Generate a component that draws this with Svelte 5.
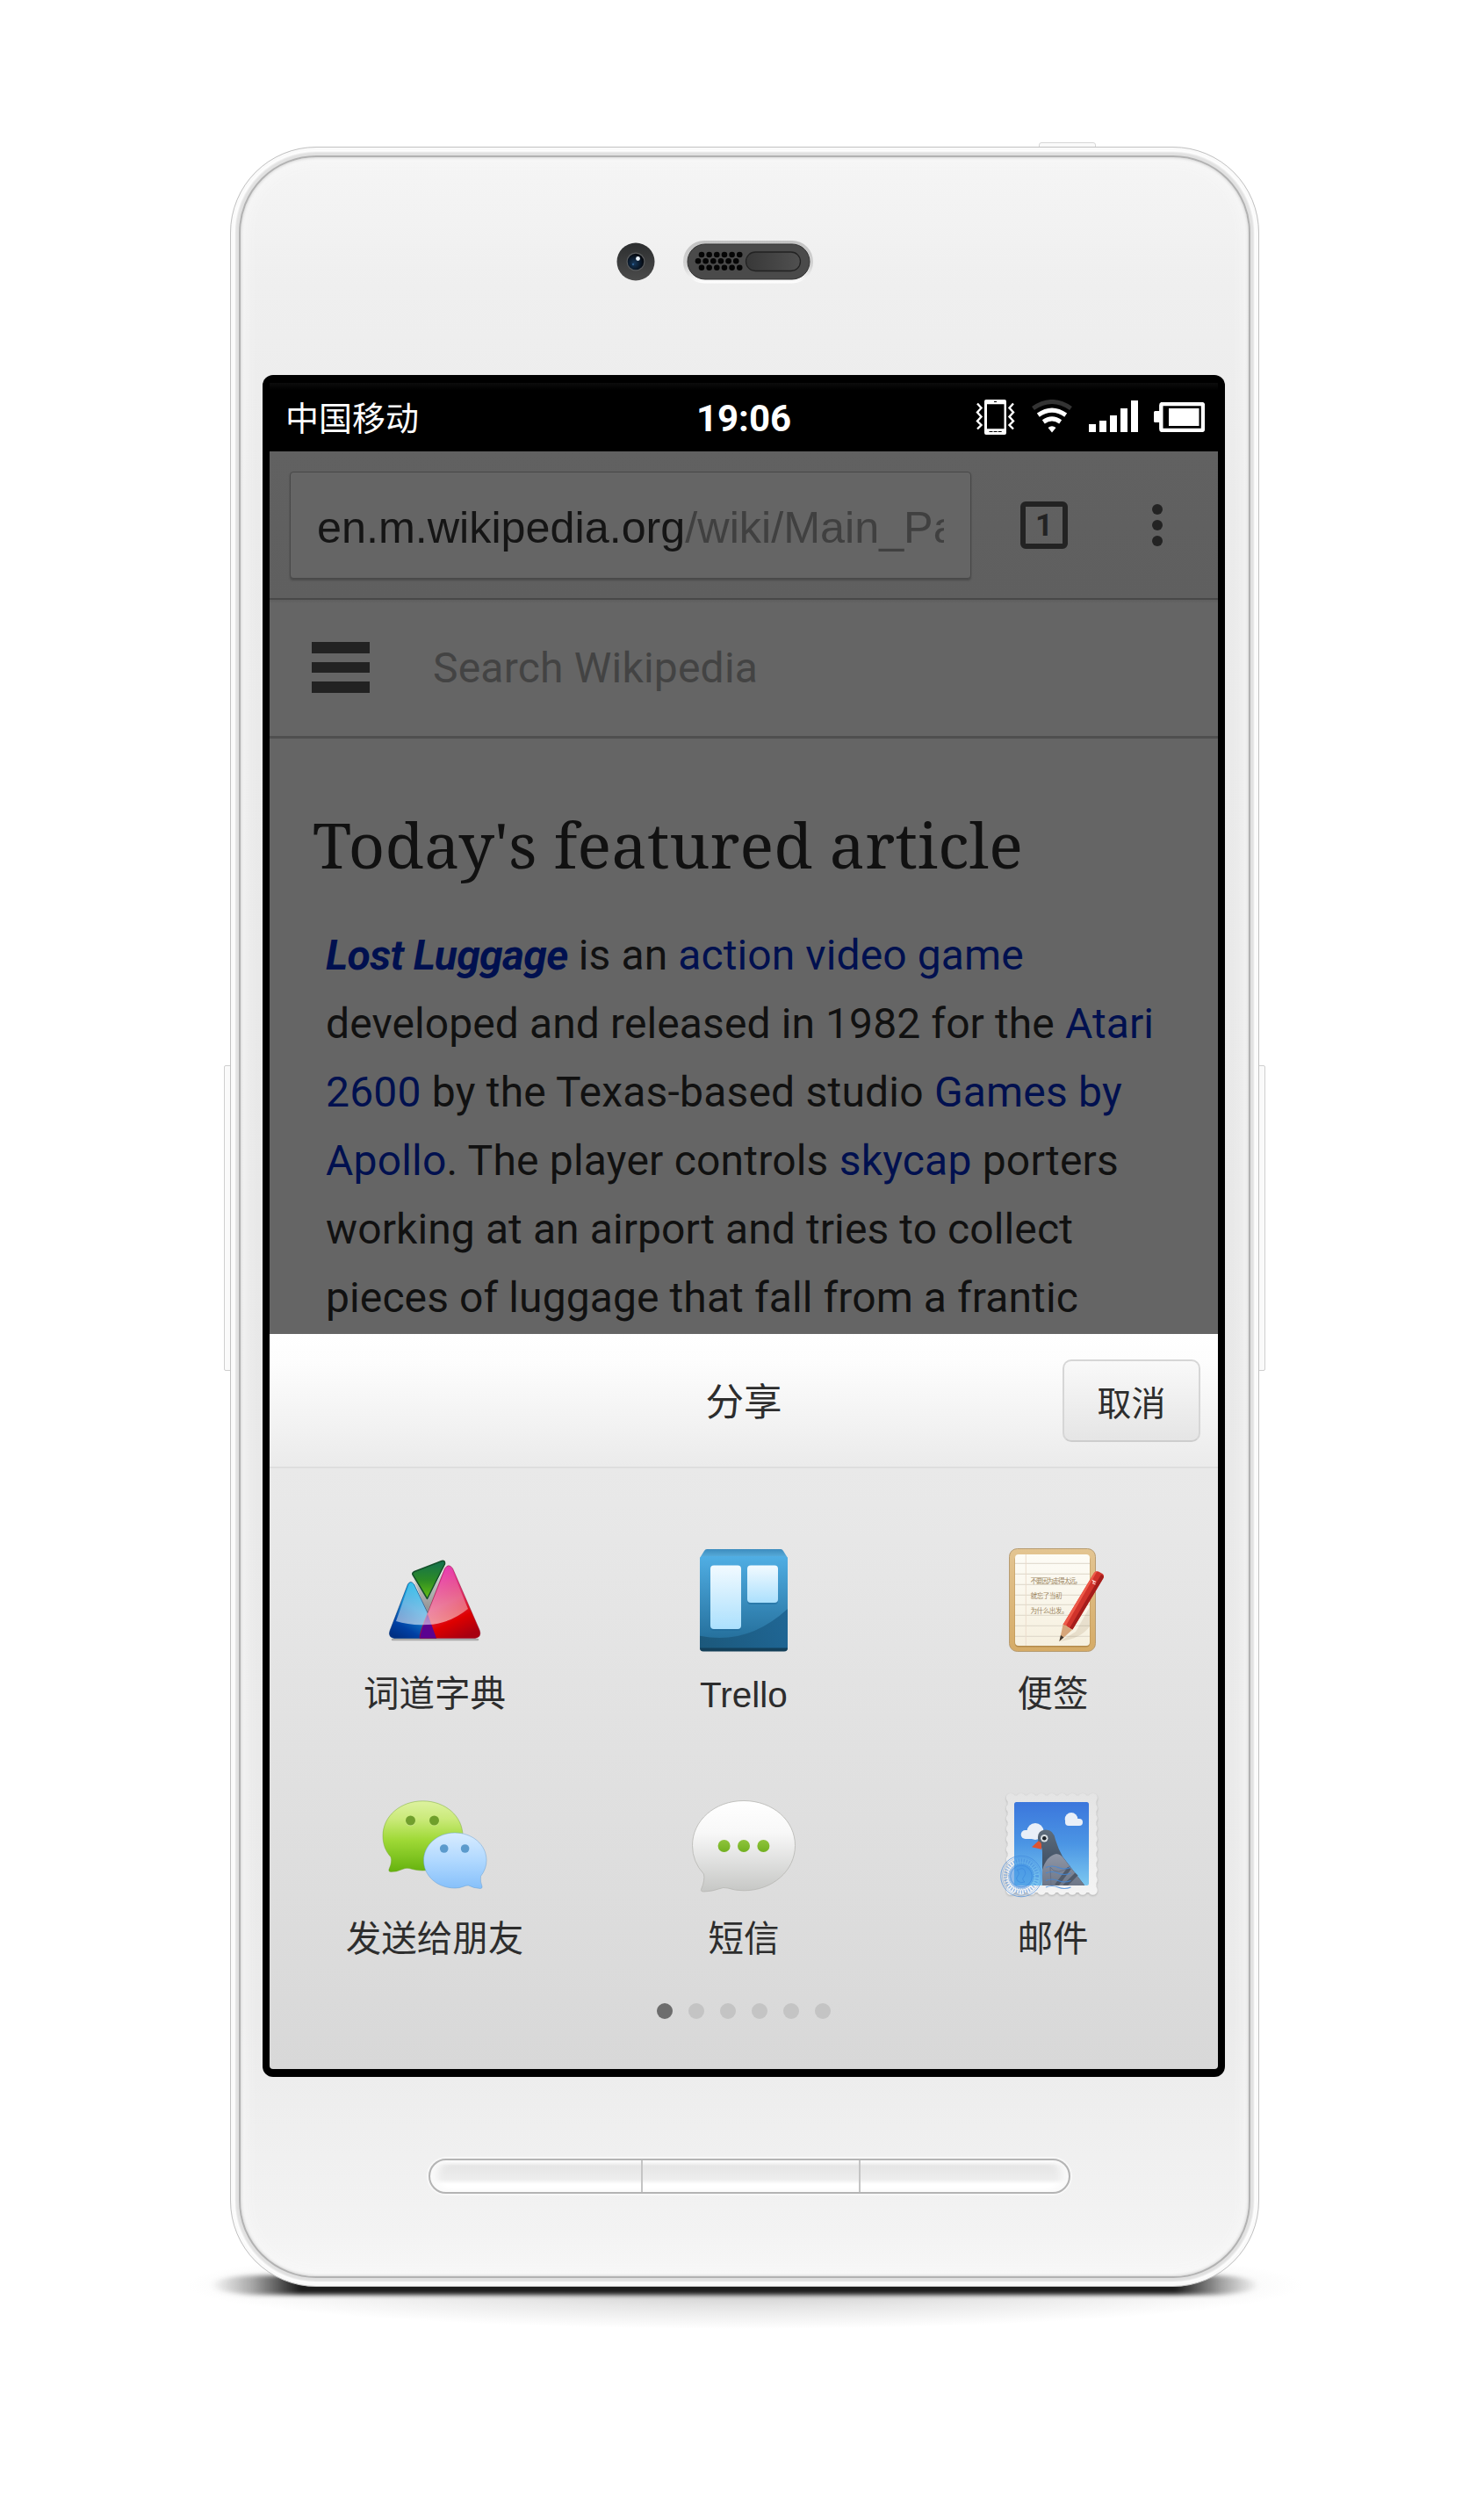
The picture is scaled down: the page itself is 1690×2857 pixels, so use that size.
<script>
  const signal = [9, 13, 19, 27, 36];
  const holes = [
    { y: 290, x0: 798 },
    { y: 297.3, x0: 794 },
    { y: 304.7, x0: 798 }
  ];
  const apps = [
    { id: 'dict', label: '词道字典' },
    { id: 'trello', label: 'Trello' },
    { id: 'notes', label: '便签' },
    { id: 'wechat', label: '发送给朋友' },
    { id: 'sms', label: '短信' },
    { id: 'mail', label: '邮件' }
  ];
  const ruled = [18.3, 30.3, 42.3, 54.3, 65.3, 77.3, 89.3, 101.3];
  const waves = [85.5, 92, 100.5, 108];
</script>

<div class="page">
  <div class="phone">
    <i class="ground haze"></i>
    <i class="ground core"></i>
    <i class="key power"></i>
    <i class="key left"></i>
    <i class="key right"></i>
    <div class="shell">
      <div class="face">
        <div class="sensors">
          <svg class="camera" width="44" height="44" viewBox="0 0 44 44">
            <defs>
              <linearGradient id="camRing" x1="0" y1="0" x2="0" y2="1">
                <stop offset="0" stop-color="#2c2e2f" /><stop offset="1" stop-color="#4b4b4b" />
              </linearGradient>
              <radialGradient id="lens" cx=".4" cy=".6" r=".6">
                <stop offset="0" stop-color="#17395c" /><stop offset=".6" stop-color="#0b1a2c" /><stop offset="1" stop-color="#05080d" />
              </radialGradient>
            </defs>
            <circle cx="22" cy="22" r="21.5" fill="url(#camRing)" />
            <circle cx="22" cy="22" r="10.5" fill="#5a5c5e" />
            <circle cx="22" cy="22" r="9.3" fill="url(#lens)" />
            <circle cx="24.5" cy="18.5" r="2.4" fill="#e9f2fa" />
            <circle cx="19" cy="25" r="1.2" fill="#2f5f8d" />
          </svg>
          <svg class="speaker" width="148" height="49" viewBox="777 274 148 49">
            <defs>
              <linearGradient id="rim" x1="0" y1="0" x2="0" y2="1">
                <stop offset="0" stop-color="#c2c2c2" /><stop offset=".6" stop-color="#d4d4d4" /><stop offset="1" stop-color="#fff" />
              </linearGradient>
              <linearGradient id="pill" x1="0" y1="0" x2="1" y2="0">
                <stop offset="0" stop-color="#383838" /><stop offset="1" stop-color="#505050" />
              </linearGradient>
            </defs>
            <rect x="777" y="274" width="148" height="48.5" rx="24" fill="url(#rim)" />
            <rect x="782" y="278" width="139" height="40" rx="20" fill="#4a4a4a" stroke="#333" />
            {#each holes as row}
              {#each [0, 1, 2, 3, 4, 5] as i}
                <circle cx={row.x0 + i * 8.65} cy={row.y} r="3.3" fill="#050505" />
              {/each}
            {/each}
            <rect x="848.5" y="287" width="62" height="21.5" rx="10.7" fill="url(#pill)" stroke="#222" stroke-width="1.3" />
          </svg>
        </div>

        <div class="screen">
          <div class="status">
            <span class="carrier">中国移动</span>
            <span class="clock">19:06</span>
            <div class="indicators">
              <svg width="46" height="40" viewBox="0 0 46 40">
                <path fill="#fff" fill-rule="evenodd" d="M12 0h21a2 2 0 0 1 2 2v36a2 2 0 0 1-2 2H12a2 2 0 0 1-2-2V2a2 2 0 0 1 2-2zM13 5.200v28h19.500v-28z" />
                <path d="M21 2.500h3M15.500 36.500h4M20.600 36.500h4M25.700 36.500h4" stroke="#000" />
                <path d="M2 4.500l4.500 5-4.500 5 4.500 5-4.500 5 4.500 4.500-4.500 4.500M43 4.500l-4.500 5 4.500 5-4.500 5 4.500 5-4.500 4.500 4.500 4.500" fill="none" stroke="#fff" stroke-width="2.400" />
              </svg>
              <svg class="wifi" width="48" height="38" viewBox="0 0 48 38">
                <g fill="none" stroke-width="5">
                  <path d="M2.500 10Q24-5 45.500 10" stroke="#333" />
                  <path d="M8.300 17.600Q24 6.600 39.700 17.600" stroke="#fff" />
                  <path d="M14.300 25.400Q24 18.400 33.700 25.400" stroke="#fff" />
                </g>
                <path d="M19.500 32Q24 28.500 28.500 32L24 37.500z" fill="#fff" />
              </svg>
              <div class="signal">
                {#each signal as h}<i style="height:{h}px"></i>{/each}
              </div>
              <svg class="battery" width="58" height="34" viewBox="0 0 58 34">
                <rect x="0" y="10" width="8" height="13" rx="1.500" fill="#fff" />
                <rect x="8.300" y="2" width="47.700" height="30" rx="1.500" fill="none" stroke="#fff" stroke-width="4.400" />
                <rect x="17" y="7" width="34.500" height="20" fill="#fff" />
              </svg>
            </div>
          </div>

          <div class="toolbar">
            <div class="url"><span>en.m.wikipedia.org<em>/wiki/Main_Page</em></span></div>
            <div class="tabs">1</div>
            <div class="more"><i></i><i></i><i></i></div>
          </div>

          <div class="search">
            <div class="burger"><i></i><i></i><i></i></div>
            <span>Search Wikipedia</span>
          </div>

          <div class="article">
            <h1>Today's featured article</h1>
            <div class="copy">
              <p><b>Lost Luggage</b> is an <a>action video game</a></p>
              <p>developed and released in 1982 for the <a>Atari</a></p>
              <p class="wide"><a>2600</a> by the Texas-based studio <a>Games by</a></p>
              <p class="wide"><a>Apollo</a>. The player controls <a>skycap</a> porters</p>
              <p>working at an airport and tries to collect</p>
              <p>pieces of luggage that fall from a frantic</p>
            </div>
          </div>

          <div class="sheet">
            <div class="sheet-head">
              <span></span>
              <h2>分享</h2>
              <button>取消</button>
            </div>
            <div class="apps">
              {#each apps as app}
                <div class="app">
                  <svg width="120" height="120" viewBox="0 0 120 120">
                    {#if app.id === 'dict'}
                      <defs>
                        <linearGradient id="dBlue" x1=".7" y1="0" x2=".2" y2="1">
                          <stop offset="0" stop-color="#14c3ee" /><stop offset=".45" stop-color="#1a8fd4" /><stop offset=".8" stop-color="#0040a4" /><stop offset="1" stop-color="#003084" />
                        </linearGradient>
                        <linearGradient id="dRed" x1=".3" y1="0" x2=".7" y2="1">
                          <stop offset="0" stop-color="#ea3fc0" /><stop offset=".5" stop-color="#e02c60" /><stop offset=".75" stop-color="#de0000" /><stop offset="1" stop-color="#a80010" />
                        </linearGradient>
                        <linearGradient id="dGreen" x1="0" y1="0" x2="0" y2="1">
                          <stop offset="0" stop-color="#14704f" /><stop offset=".5" stop-color="#2b8a26" /><stop offset="1" stop-color="#66c010" />
                        </linearGradient>
                        <linearGradient id="dGray" x1="0" y1="0" x2="0" y2="1">
                          <stop offset="0" stop-color="#ddd" /><stop offset="1" stop-color="#888" />
                        </linearGradient>
                        <linearGradient id="dGloss" x1="0" y1="0" x2="0" y2="1">
                          <stop offset="0" stop-color="#fff" stop-opacity="0" /><stop offset="1" stop-color="#fff" stop-opacity=".55" />
                        </linearGradient>
                      </defs>
                      <path d="M12 105H109" stroke="#000" stroke-opacity=".25" stroke-width="2.500" stroke-linecap="round" />
                      <path d="M36 36L52 78L73 22L51 58z" fill="url(#dGray)" />
                      <path d="M29.500 42Q32.500 37 36.500 42L52 75L62 103.500H14Q6.500 102 9 95z" fill="url(#dBlue)" stroke="#00327a" stroke-opacity=".6" stroke-width="1" />
                      <path d="M71.500 24Q76 17.500 80.500 24L111 94Q114 102 106 103.500H43Q42 99 52 75z" fill="url(#dRed)" stroke="#900c30" stroke-opacity=".5" stroke-width="1" />
                      <path d="M52 76L62 103.500H43Q44 95 52 76z" fill="#5a0390" />
                      <path d="M16 84L31 42Q33 38 36 42L52 75L73 24Q76 20 79 24L98 70Q77 87 52 88Q31 89 16 84z" fill="url(#dGloss)" />
                      <path d="M35 31Q34 29 37 27.500L68 15.500Q72 14.500 71.500 19L51.500 58.500z" fill="url(#dGreen)" stroke="#14502a" stroke-width="1.500" stroke-linejoin="round" />
                    {:else if app.id === 'trello'}
                      <defs>
                        <linearGradient id="tBody" x1="0" y1="0" x2="0" y2="1">
                          <stop offset="0" stop-color="#50aee4" /><stop offset="1" stop-color="#1f6792" />
                        </linearGradient>
                        <linearGradient id="tLid" x1="0" y1="0" x2="0" y2="1">
                          <stop offset="0" stop-color="#3c8cbe" /><stop offset="1" stop-color="#5cb0de" />
                        </linearGradient>
                        <linearGradient id="tCard" x1="0" y1="0" x2="0" y2="1">
                          <stop offset="0" stop-color="#f2faff" /><stop offset="1" stop-color="#abe0fd" />
                        </linearGradient>
                        <linearGradient id="tDark" x1="0" y1="0" x2="1" y2="0">
                          <stop offset="0" stop-color="#1b5678" /><stop offset="1" stop-color="#1e6492" />
                        </linearGradient>
                      </defs>
                      <path d="M18 2H102Q104 2 105 4L110 12H10L15 4Q16 2 18 2z" fill="url(#tLid)" />
                      <path d="M10 12Q11 10 14 10H106Q109 10 110 12V114Q110 118 106 118H14Q10 118 10 114z" fill="url(#tBody)" />
                      <path d="M10 100.700Q64 112 110 70V115H10z" fill="url(#tDark)" opacity=".9" />
                      <path d="M10 114.500H110Q110 118.500 106 118.500H14Q10 118.500 10 114.500z" fill="#133f59" />
                      <rect x="22" y="22" width="35" height="73" rx="4" fill="#1c6796" opacity=".45" />
                      <rect x="64" y="22" width="35" height="43" rx="4" fill="#1c6796" opacity=".45" />
                      <rect x="22" y="20.500" width="35" height="72.500" rx="4" fill="url(#tCard)" />
                      <rect x="64" y="20.500" width="35" height="42.500" rx="4" fill="url(#tCard)" />
                    {:else if app.id === 'notes'}
                      <defs>
                        <linearGradient id="nBoard" x1="0" y1="0" x2="0" y2="1">
                          <stop offset="0" stop-color="#e3c592" /><stop offset="1" stop-color="#d5ab66" />
                        </linearGradient>
                        <linearGradient id="nPaper" x1="0" y1="0" x2="0" y2="1">
                          <stop offset="0" stop-color="#fdfcf6" /><stop offset="1" stop-color="#f6f0df" />
                        </linearGradient>
                      </defs>
                      <rect x="10.500" y="1.500" width="98" height="117" rx="9" fill="url(#nBoard)" stroke="#b79c72" />
                      <rect x="16.500" y="9.500" width="86" height="104" rx="4.500" fill="#8a6227" opacity=".45" />
                      <rect x="17" y="8" width="85" height="104" rx="4" fill="url(#nPaper)" />
                      {#each ruled as y}<path d="M17 {y}H102" stroke="#dcd6c8" />{/each}
                      <path d="M29.300 8V112" stroke="#ecdccb" />
                      <g class="hand">
                        <text x="34.500" y="40.500" textLength="58">不要因为走得太远，</text>
                        <text x="34.500" y="57.500" textLength="36">就忘了当初</text>
                        <text x="34.500" y="75" textLength="43">为什么出发。</text>
                      </g>
                      <path d="M68 107L86 96L102 68V90Q92 104 68 107z" fill="#7a5a30" opacity=".13" />
                      <path d="M71.500 88L107 29Q109 26.500 112 27.500L116.500 30Q119 32 117.500 35L82.500 93.500z" fill="#d0332b" />
                      <path d="M71.500 88L107 29Q108.500 27 110.500 27L75 89z" fill="#ef5a49" />
                      <path d="M79 92L115 31Q119 32 117.500 35L82.500 93.500z" fill="#a51d1b" />
                      <path d="M71.500 88L75.500 89L78.500 92L82.500 93.500L67.500 107z" fill="#d7a67a" />
                      <path d="M69 100L72.500 102.500L67.300 107z" fill="#42372f" />
                      <path d="M106 38l3 1.500m-4 1l3.500 1.500m-3.500-5l2 3" stroke="#fbd9d3" stroke-width="1.300" />
                    {:else if app.id === 'wechat'}
                      <defs>
                        <linearGradient id="wGreen" x1="0" y1="0" x2="0" y2="1">
                          <stop offset="0" stop-color="#ddf29f" /><stop offset=".25" stop-color="#cbea7b" /><stop offset=".55" stop-color="#9fd936" /><stop offset="1" stop-color="#65b20e" />
                        </linearGradient>
                        <linearGradient id="wBlue" x1="0" y1="0" x2="0" y2="1">
                          <stop offset="0" stop-color="#d8ecff" /><stop offset=".5" stop-color="#b0d8ff" /><stop offset="1" stop-color="#86c0fa" />
                        </linearGradient>
                      </defs>
                      <path d="M46.500 9.800C72 9.800 92 27 92 49.500S72 89 46.500 89C41 89 36 88 31 86.500Q27 85.500 22 88T10 90.500Q7 90.500 8 87.500Q12 79 10 73.500C4 67 1 59 1 49.500C1 27 21 9.800 46.500 9.800z" fill="url(#wGreen)" stroke="#6fa52a" stroke-opacity=".45" />
                      <circle cx="32.500" cy="32.800" r="5.500" fill="#d8f09a" />
                      <circle cx="59.500" cy="32.800" r="5.500" fill="#d0ec88" />
                      <circle cx="32.500" cy="32" r="5.500" fill="#719f2d" />
                      <circle cx="59.500" cy="32" r="5.500" fill="#6f9f2a" />
                      <path d="M83 46C103 46 119 59.500 119 77.500Q119 87 112.500 95.500Q111.500 101 114 107Q114.500 109.500 112 109.500Q104 109 98.500 106Q96 105.500 92 107.500Q88 109 83 109C63 109 47.500 95 47.500 77.500S63 46 83 46z" fill="url(#wBlue)" stroke="#5f9bd0" stroke-opacity=".45" />
                      <circle cx="70.700" cy="64" r="4.800" fill="#5b9acc" />
                      <circle cx="94.600" cy="64" r="4.800" fill="#5b9acc" />
                    {:else if app.id === 'sms'}
                      <defs>
                        <linearGradient id="sBody" x1="0" y1="0" x2="0" y2="1">
                          <stop offset="0" stop-color="#fff" /><stop offset=".35" stop-color="#f8f8f8" /><stop offset="1" stop-color="#c6c7c5" />
                        </linearGradient>
                        <linearGradient id="sDot" x1="0" y1="0" x2="0" y2="1">
                          <stop offset="0" stop-color="#8fc43c" /><stop offset="1" stop-color="#72b020" />
                        </linearGradient>
                      </defs>
                      <path d="M60 9.500C93 9.500 118.500 32 118.500 60.500S93 111.800 60 111.800Q50 111.800 42 109Q37 107.500 31 110T15 113Q10.500 113 11.500 110.500Q16 100 14.500 93Q1.500 79 1.500 60.500C1.500 32 27 9.500 60 9.500z" fill="url(#sBody)" stroke="#b6b7b3" stroke-opacity=".8" />
                      <circle cx="37.600" cy="61" r="7" fill="url(#sDot)" />
                      <circle cx="60" cy="61" r="7" fill="url(#sDot)" />
                      <circle cx="82.400" cy="61" r="7" fill="url(#sDot)" />
                    {:else}
                      <defs>
                        <linearGradient id="mSky" x1="0" y1="0" x2="0" y2="1">
                          <stop offset="0" stop-color="#3b76dc" /><stop offset=".5" stop-color="#4b95e4" /><stop offset="1" stop-color="#7cc8f0" />
                        </linearGradient>
                        <linearGradient id="mPaper" gradientUnits="userSpaceOnUse" x1="0" y1="0" x2="0" y2="118">
                          <stop offset="0" stop-color="#e4e4e4" /><stop offset="1" stop-color="#f4f4f4" />
                        </linearGradient>
                        <linearGradient id="mBird" x1="0" y1="0" x2="0" y2="1">
                          <stop offset="0" stop-color="#5e6c7b" /><stop offset=".5" stop-color="#46566a" /><stop offset="1" stop-color="#3c4a5c" />
                        </linearGradient>
                        <linearGradient id="mWing" x1="0" y1="0" x2="0" y2="1">
                          <stop offset="0" stop-color="#8f96a6" /><stop offset="1" stop-color="#6d7687" />
                        </linearGradient>
                        <clipPath id="mClip"><rect x="16" y="11" width="85" height="95" rx="2" /></clipPath>
                      </defs>
                      <g class="stamp">
                        <rect x="8.500" y="3.500" width="101" height="110.500" rx="3" fill="url(#mPaper)" />
                        <rect x="12" y="6.200" width="93.600" height="105.300" fill="none" stroke="url(#mPaper)" stroke-width="10.400" stroke-linecap="round" stroke-dasharray="0 11.700" />
                      </g>
                      <rect x="16" y="11" width="85" height="95" rx="2.500" fill="url(#mSky)" />
                      <g fill="#e9eff8">
                        <circle cx="40" cy="44.500" r="9.500" /><rect x="23.700" y="43" width="28" height="10" rx="5" />
                        <circle cx="81" cy="30.300" r="7.300" /><rect x="74" y="30" width="20" height="8" rx="4" />
                      </g>
                      <g clip-path="url(#mClip)">
                        <path d="M48 107V68Q48 62 44 58Q40 44 51 42.500Q61 42 63 54Q66 64 71 73L97 107z" fill="url(#mBird)" />
                        <path d="M48 107V88Q53 72 64 70Q69 70 73 76L97 107z" fill="url(#mWing)" />
                        <path d="M58 107L57 85Q64 96 80 84" fill="none" stroke="#667085" stroke-width="1" />
                        <path d="M64 106L79 86M73 107L87 93" stroke="#515b6b" stroke-width="4.500" />
                      </g>
                      <path d="M36 62.300L43.300 55.500Q47 56 47 60V64.700z" fill="#dd5433" />
                      <circle cx="50.300" cy="52.300" r="4.200" fill="#d9dfe2" />
                      <circle cx="50.300" cy="52.300" r="2.300" fill="#1e242a" />
                      <g fill="none" stroke="#3f87dc">
                        {#each waves as y}
                          <path d="M52 {y}q7-3 14 0t14.500 0" stroke-opacity=".8" stroke-width="1.200" />
                        {/each}
                        <circle cx="24" cy="95.500" r="23.300" stroke-opacity=".65" />
                        <circle cx="24" cy="95.500" r="21.500" stroke-opacity=".4" stroke-width=".8" />
                        <circle cx="24" cy="95.500" r="18" stroke-opacity=".55" stroke-width="4" stroke-dasharray="1.300 1.700" />
                        <circle cx="24" cy="95.500" r="14.500" stroke-opacity=".7" stroke-dasharray="1.500 1" />
                        <circle cx="24" cy="95.500" r="12.300" stroke-opacity=".6" />
                        <path d="M21 88q5-3 7 1t-1 7 1 6q-5 2-8-1t0-6-1-7z" stroke-opacity=".6" />
                      </g>
                      <circle cx="24" cy="95.500" r="14" fill="#2f83e0" fill-opacity=".5" />
                    {/if}
                  </svg>
                  <span class:latin={app.id === 'trello'}>{app.label}</span>
                </div>
              {/each}
            </div>
            <div class="dots">
              {#each apps as app, i}<i class:on={i === 0}></i>{/each}
            </div>
          </div>
        </div>

        <div class="navkeys"><i></i><i></i><i></i></div>
      </div>
    </div>
  </div>
</div>

<style>
  :global(body) { background: #fff; }
  * { box-sizing: border-box; margin: 0; padding: 0; }
  .page { width: 1690px; height: 2857px; padding: 167px 256px 0 262px; overflow: hidden; background: #fff; font-family: Roboto, "Noto Sans CJK SC", sans-serif; }
  .phone { position: relative; width: 1172px; height: 2437px; }

  .ground { position: absolute; }
  .haze { left: -50px; right: -50px; bottom: -48px; height: 100px; border-radius: 50%; background: radial-gradient(closest-side, #c4c4c4, #e8e8e8 55%, #fff0); }
  .core { left: -22px; right: 0; bottom: -9px; height: 22px; border-radius: 60px / 11px; background: linear-gradient(90deg, #1c1c1c00, #1c1c1c60 4%, #1c1c1c 8.500%, #1c1c1c 92%, #1c1c1c60 96.500%, #1c1c1c00); filter: blur(2.500px); }
  .key { position: absolute; background: #fafafa; border: 1px solid #cfcfcf; }
  .power { left: 921px; top: -5px; width: 65px; height: 10px; border-radius: 3px 3px 0 0; border-color: #d6d6d6; }
  .left { left: -7px; top: 1046px; width: 10px; height: 348px; border-radius: 2px 0 0 2px; }
  .right { right: -7px; top: 1046px; width: 10px; height: 348px; border-radius: 0 2px 2px 0; }

  .shell { position: relative; height: 100%; padding: 9px; border: 1px solid #c2c2c2; border-radius: 98px; background: #e1e1e1; box-shadow: inset 0 0 0 3px #fafafa, inset 0 0 2px 5px #fff; }
  .face { height: 100%; border: 2px solid #b2b2b2; border-radius: 88px; padding: 94px 25px 0; background: linear-gradient(#f5f5f5, #efefef 6%, #ebebeb 16%, #e8e8e8 50%, #ebebeb 88%, #f3f3f3 98%, #f7f7f7); box-shadow: inset 0 0 3px 1px #d8d8d8, inset 0 0 16px 4px #f8f8f8; }

  .sensors { display: flex; align-items: flex-start; height: 154px; padding-left: 403px; }
  .camera { margin-top: 3px; }
  .speaker { margin-left: 32px; margin-top: 1px; }

  .screen { width: 1096px; height: 1938px; background: #000; border-radius: 12px; padding: 9px 8px; display: flex; flex-direction: column; overflow: hidden; }
  .status { height: 78px; flex: none; display: grid; grid-template-columns: 1fr 200px 1fr; align-items: center; color: #fff; background: linear-gradient(#0c0c0c, #000 8px); }
  .carrier { padding-left: 18px; font-size: 38px; line-height: 78px; }
  .clock { text-align: center; font-weight: 700; font-size: 42px; line-height: 82px; }
  .indicators { display: flex; align-items: flex-end; justify-content: flex-end; height: 59px; align-self: start; padding-right: 15px; }
  .wifi { margin: 0 18px 2px 17px; }
  .signal { display: flex; gap: 4px; align-items: flex-end; margin: 0 18px 3px 0; }
  .signal i { width: 8px; background: #fff; }
  .battery { margin-bottom: 3px; }

  .toolbar { height: 169px; flex: none; background: linear-gradient(#616161, #5f5f5f); border-bottom: 2px solid #484848; display: flex; align-items: center; padding-left: 23px; }
  .url { width: 776px; height: 122px; border: 1px solid #484848; border-radius: 4px; background: #656565; padding: 0 30px; color: #151515; box-shadow: 0 2px 2px #4b4b4b; font: 50.3px/122px "Liberation Sans", sans-serif; }
  .url span { display: block; overflow: hidden; white-space: nowrap; padding-top: 2px; }
  .url em { font-style: normal; color: #404040; }
  .tabs { width: 54px; height: 54px; margin-left: 56px; border: 6px solid #232323; border-radius: 6px; color: #232323; font: 700 35px/43px Roboto, sans-serif; text-align: center; }
  .more { display: grid; gap: 6px; margin-left: 96px; }
  .more i { width: 12px; height: 12px; border-radius: 50%; background: #232323; }

  .search { height: 158px; flex: none; background: linear-gradient(#5e5e5e, #656565 4px); border-bottom: 3px solid #4f4f4f; display: flex; align-items: center; padding-left: 48px; color: #434343; font-size: 48px; }
  .search span { margin-left: 72px; letter-spacing: .2px; }
  .burger { display: grid; gap: 10px; margin-top: -1px; }
  .burger i { width: 66px; height: 12.500px; background: #222; }

  .article { height: 678px; flex: none; background: #656565; color: #111; padding: 73px 0 0 49px; overflow: hidden; white-space: nowrap; }
  h1 { font: 400 72px/94px "Droid Serif", "Noto Serif", "DejaVu Serif Condensed", "DejaVu Serif", serif; letter-spacing: .2px; }
  .copy { padding: 41px 0 0 15px; font-size: 48px; line-height: 78px; letter-spacing: .1px; }
  .copy .wide { letter-spacing: .2px; }
  .copy b, .copy a { color: #00104f; }
  .copy b { font-style: italic; font-weight: 700; letter-spacing: -.65px; }

  .sheet { flex: 1; background: linear-gradient(#e9e9e9 153px, #d8d8d8); border-radius: 0 0 4px 4px; color: #2d2d2d; }
  .sheet-head { height: 153px; display: grid; grid-template-columns: 1fr auto 1fr; align-items: center; padding: 0 20px; background: linear-gradient(#fff, #fdfdfd 20%, #ebebeb); border-bottom: 2px solid #dedede; }
  h2 { font-weight: 400; font-size: 43.500px; line-height: 64px; padding-top: 6px; }
  button { justify-self: end; width: 157px; height: 94px; border: 2px solid #d6d6d6; border-bottom-color: #cdcdcd; border-radius: 10px; background: linear-gradient(#f9f9f9, #e5e5e5); color: inherit; font: 39px/86px "Noto Sans CJK SC", sans-serif; }
  .apps { display: grid; grid-template-columns: repeat(3, 352px); grid-auto-rows: 279px; padding: 90px 12px 0; }
  .app { display: flex; flex-direction: column; align-items: center; font-size: 40.500px; line-height: 60px; }
  .app svg { overflow: visible; }
  .app span { margin-top: 17px; }
  .app .latin { font-family: "Liberation Sans", sans-serif; margin-top: 18px; }
  .hand text { font: 7.500px "Noto Sans CJK SC", sans-serif; fill: #9a8460; }
  .stamp { filter: drop-shadow(0 1px 1px #0003); }
  .dots { display: flex; justify-content: center; gap: 18px; margin-top: -39px; }
  .dots i { width: 18px; height: 18px; border-radius: 50%; background: #c4c4c4; }
  .dots .on { background: #6d6d6d; }

  .navkeys { display: grid; grid-template-columns: 240px 248px 1fr; width: 731px; height: 40px; margin: 93px 0 0 189px; border: 2px solid #b4b4b4; border-radius: 20px; background: linear-gradient(#fff, #e5e5e5 15%, #ededed 60%, #fff 75%); box-shadow: 0 0 1px 2px #f8f8f8, inset 8px 0 8px #fafafa, inset -8px 0 8px #fafafa; }
  .navkeys i + i { border-left: 2px solid #c4c4c4; }
</style>
